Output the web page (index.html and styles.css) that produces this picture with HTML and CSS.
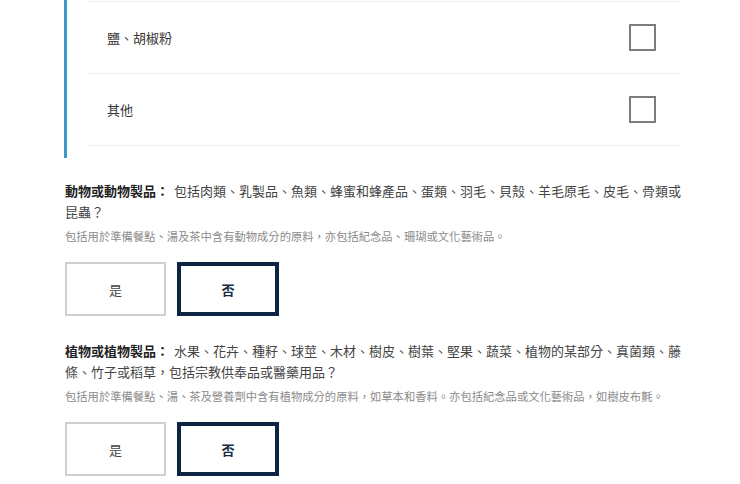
FILE: index.html
```html
<!DOCTYPE html>
<html lang="zh-Hant">
<head>
  <meta charset="UTF-8">
  <meta name="viewport" content="width=device-width, initial-scale=1.0">
  <link rel="stylesheet" href="styles.css">
</head>
<body>
  <div class="page">

    <!-- food items list -->
    <div class="itemGroup">
      <div class="itemList">
        <div class="itemRow">
          <span class="itemLabel">鹽、胡椒粉</span>
          <span class="checkBox"></span>
        </div>
        <div class="itemRow">
          <span class="itemLabel">其他</span>
          <span class="checkBox"></span>
        </div>
      </div>
    </div>

    <!-- question: animal -->
    <div class="question">
      <p class="questionText"><b>動物或動物製品：</b>包括肉類、乳製品、魚類、蜂蜜和蜂產品、蛋類、羽毛、貝殼、羊毛原毛、皮毛、骨類或昆蟲？</p>
      <p class="questionHint">包括用於準備餐點、湯及茶中含有動物成分的原料，亦包括紀念品、珊瑚或文化藝術品。</p>
      <div class="choices">
        <div class="choice">是</div>
        <div class="choice selected">否</div>
      </div>
    </div>

    <!-- question: plant -->
    <div class="question">
      <p class="questionText"><b>植物或植物製品：</b>水果、花卉、種籽、球莖、木材、樹皮、樹葉、堅果、蔬菜、植物的某部分、真菌類、藤條、竹子或稻草，包括宗教供奉品或醫藥用品？</p>
      <p class="questionHint">包括用於準備餐點、湯、茶及營養劑中含有植物成分的原料，如草本和香料。亦包括紀念品或文化藝術品，如樹皮布氈。</p>
      <div class="choices">
        <div class="choice">是</div>
        <div class="choice selected">否</div>
      </div>
    </div>

  </div>
</body>
</html>
```

FILE: styles.css
```css
html, body {
  margin: 0;
  padding: 0;
  background-color: #fff;
  font-family: "Noto Sans CJK TC", "Noto Sans", sans-serif;
  color: #444;
}

.page {
  padding-left: 65px;
  width: 620px;
}

.itemGroup {
  margin-left: -1px;
  border-left: 3px solid #3b9ac4;
  padding-top: 1px;
  padding-bottom: 12px;
}

.itemList {
  margin-left: 21px;
  width: 592px;
  border-top: 1px solid #efefef;
}

.itemRow {
  display: flex;
  align-items: center;
  justify-content: space-between;
  height: 71px;
  border-bottom: 1px solid #efefef;
  padding: 0 24px 0 19px;
}

.itemLabel {
  font-size: 13px;
  color: #333;
}

.checkBox {
  width: 23px;
  height: 23px;
  border: 2px solid #7d7d7d;
  background-color: #fff;
}

.question {
  margin-top: 24px;
}

.itemGroup + .question {
  margin-top: 22px;
}

.questionText {
  margin: 0;
  font-size: 13px;
  line-height: 21px;
  color: #444;
}

.questionText b {
  color: #222;
  font-weight: 700;
  margin-right: 5px;
}

.questionHint {
  margin: 5px 0 0 0;
  font-size: 11.3px;
  line-height: 18px;
  color: #8a8a8a;
}

.choices {
  display: flex;
  gap: 11px;
  margin-top: 17px;
}

.choice {
  box-sizing: border-box;
  width: 101px;
  height: 54px;
  display: flex;
  align-items: center;
  justify-content: center;
  border: 2px solid #cfcfcf;
  font-size: 13px;
  color: #444;
  cursor: pointer;
}

.choice.selected {
  width: 102px;
  border: 4px solid #0d2443;
  color: #1a2b45;
  font-weight: 700;
}
```
